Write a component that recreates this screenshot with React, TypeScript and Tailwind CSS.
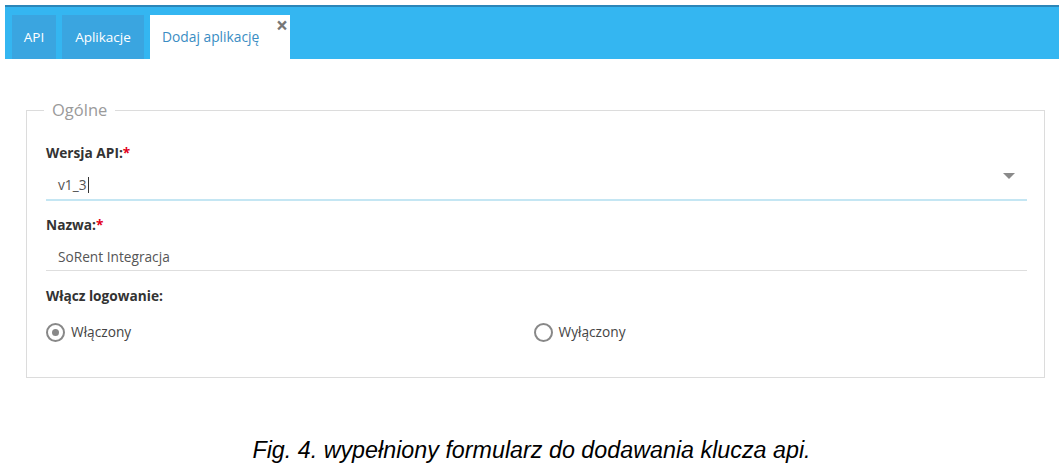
import { ReactNode } from "react";

const tabs = [
    { label: "API", width: "w-[44px]" },
    { label: "Aplikacje", width: "w-[82px]" },
];

function Label({ children, required }: { children: ReactNode; required?: boolean }) {
    return (
        <div className="h-[18px] text-[13.7px] font-bold leading-[18px] text-[#333]">
            {children}
            {required && <span className="text-[#e2001a]">*</span>}
        </div>
    );
}

function Radio({ label, checked }: { label: string; checked?: boolean }) {
    return (
        <label className="flex items-center gap-[6px] text-[13.7px] leading-[20px] text-[#444]">
            <span className="flex h-[19px] w-[19px] items-center justify-center rounded-full border-2 border-[#888] bg-white">
                {checked && <span className="h-[7px] w-[7px] rounded-full bg-[#888]" />}
            </span>
            {label}
        </label>
    );
}

export default function App() {
    return (
        <div className="h-[465px] w-[1063px] bg-white font-['Open_Sans',sans-serif]">
            {/* tab bar */}
            <div className="ml-[5px] mr-[4px] pt-[5px]">
                <div className="flex h-[54px] items-end gap-[6px] border-t-2 border-[#2c86b8] bg-[#34b6f1] pl-[7px]">
                    {tabs.map((tab) => (
                        <div
                            key={tab.label}
                            className={`${tab.width} flex h-[44px] items-center justify-center bg-[#3aa5e0] text-[13.5px] text-white`}
                        >
                            {tab.label}
                        </div>
                    ))}
                    <div className="relative flex h-[44px] w-[140px] items-center justify-start bg-white pl-[12px] text-[13.8px] text-[#3a8dc3]">
                        Dodaj aplikację
                        <span className="absolute right-[2px] top-[-1px] text-[21px] font-bold leading-[22px] text-[#777]">
                            ×
                        </span>
                    </div>
                </div>
            </div>

            {/* form */}
            <div className="pl-[26px] pr-[18px] pt-[40px]">
                <fieldset className="border border-[#dcdcdc] px-[17px] pb-[35px] pl-[19px] pt-[23px]">
                    <legend className="-ml-[2px] px-[8px] text-[16.5px] leading-[22px] text-[#9a9a9a]">Ogólne</legend>

                    <Label required>Wersja API:</Label>
                    <div className="mt-[4px] flex h-[35px] items-end justify-between border-b-2 border-[#c4e6f3] pb-[5px] pl-[12px] pr-[12px]">
                        <span className="flex items-center text-[13.7px] leading-[18px] text-[#555]">
                            v1_3
                            <span className="ml-[1px] h-[16px] w-[1px] bg-[#333]" />
                        </span>
                        <span className="mb-[15px] h-0 w-0 border-x-[6px] border-t-[6px] border-x-transparent border-t-[#8a8a8a]" />
                    </div>

                    <div className="mt-[15px]">
                        <Label required>Nazwa:</Label>
                    </div>
                    <div className="mt-[4px] flex h-[33px] items-end border-b border-[#dedede] pb-[4px] pl-[12px]">
                        <span className="text-[13.7px] leading-[18px] text-[#555]">SoRent Integracja</span>
                    </div>

                    <div className="mt-[16px]">
                        <Label>Włącz logowanie:</Label>
                    </div>
                    <div className="mt-[17px] grid grid-cols-2">
                        <Radio label="Włączony" checked />
                        <div className="-ml-[3px]">
                            <Radio label="Wyłączony" />
                        </div>
                    </div>
                </fieldset>
            </div>

            <p className="mt-[59px] text-center font-['Liberation_Sans',Arial,sans-serif] text-[23.3px] italic leading-[26px] text-black">
                Fig. 4. wypełniony formularz do dodawania klucza api.
            </p>
        </div>
    );
}
